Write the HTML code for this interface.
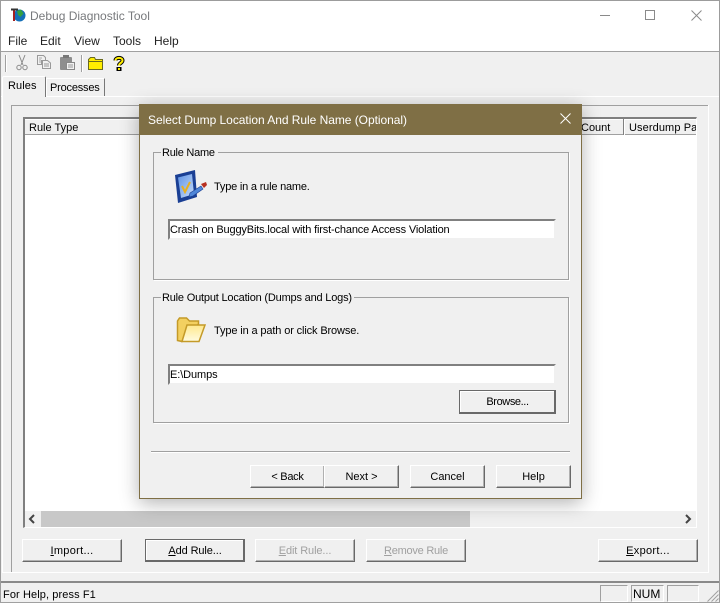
<!DOCTYPE html>
<html><head><meta charset="utf-8"><title>Debug Diagnostic Tool</title>
<style>
html,body{margin:0;padding:0;width:720px;height:603px;overflow:hidden;background:#f0f0f0}
body{position:relative;font-family:"Liberation Sans",sans-serif;font-size:11px;color:#000}
.a{position:absolute;box-sizing:border-box}
.t{position:absolute;white-space:nowrap;line-height:14px}
.b{position:absolute;box-sizing:border-box;background:#f0f0f0;border:1px solid;border-color:#fff #696969 #696969 #fff;box-shadow:inset -1px -1px 0 #b0b0b0;text-align:center;line-height:22px;white-space:nowrap}
.d{color:#a0a0a0}
.i{position:absolute;box-sizing:border-box;background:#fff;border:2px solid;border-color:#808080 #f0f0f0 #f0f0f0 #808080;white-space:nowrap;line-height:15px}
.g{position:absolute;box-sizing:border-box;border:1px solid #a0a0a0;box-shadow:1px 1px 0 #fff}
.l{position:absolute;background:#f0f0f0;padding:0 1px;line-height:13px;white-space:nowrap}
u{text-decoration:underline}
svg{position:absolute;overflow:visible}
</style></head><body>
<div class="a" style="left:0;top:0;width:720px;height:603px;border:1px solid #9c9c9c;border-bottom:0"></div>
<div class="a" style="left:1px;top:1px;width:718px;height:50px;background:#fff"></div>
<svg style="left:10px;top:7px" width="16" height="16" viewBox="0 0 16 16"><circle cx="9.500" cy="8.500" r="6" fill="#1570b8"/><path d="M7 4l4-1.500 2.500 4-3 3.500-2.500-2z" fill="#35a040"/><path d="M3 3h2v11H3z" fill="#a52020"/><path d="M1 1.500h7v2H1z" fill="#333"/></svg>
<div class="t" style="left:30px;top:9px;font-size:12px;color:#77797c">Debug Diagnostic Tool</div>
<div class="a" style="left:600px;top:15px;width:10px;height:1px;background:#8a8a8a"></div>
<div class="a" style="left:645px;top:10px;width:10px;height:10px;border:1px solid #8a8a8a"></div>
<svg style="left:691px;top:10px" width="11" height="11"><path d="M.5.5l10 10M10.500.5l-10 10" stroke="#8a8a8a" fill="none"/></svg>
<div class="t" style="left:8px;top:34px;font-size:12px;color:#222">File</div>
<div class="t" style="left:40px;top:34px;font-size:12px;color:#222">Edit</div>
<div class="t" style="left:74px;top:34px;font-size:12px;color:#222">View</div>
<div class="t" style="left:113px;top:34px;font-size:12px;color:#222">Tools</div>
<div class="t" style="left:154px;top:34px;font-size:12px;color:#222">Help</div>
<div class="a" style="left:1px;top:51px;width:718px;height:1px;background:#a0a0a0"></div>
<div class="a" style="left:5px;top:55px;width:1px;height:17px;background:#a0a0a0;box-shadow:1px 0 0 #fff"></div>
<div class="a" style="left:81px;top:55px;width:1px;height:17px;background:#a0a0a0;box-shadow:1px 0 0 #fff"></div>
<svg style="left:16px;top:55px" width="12" height="16"><path d="M3 0l4 10M9 0L5 10" stroke="#8a8a8a" fill="none"/><circle cx="3" cy="12.500" r="2.200" fill="none" stroke="#8a8a8a"/><circle cx="9" cy="12.500" r="2.200" fill="none" stroke="#8a8a8a"/></svg>
<svg style="left:37px;top:55px" width="15" height="15"><path d="M.5.500h6l2 2v3h-4v4h-4z" fill="#f0f0f0" stroke="#999"/><path d="M2 3h3M2 5h2M2 7h2" stroke="#aaa"/><path d="M5.500 5.500h5l3 2.500v5.500h-8z" fill="#f0f0f0" stroke="#999"/><path d="M7 9h5M7 11h5" stroke="#999"/></svg>
<svg style="left:60px;top:55px" width="16" height="15"><rect x="0" y="2" width="12" height="13" rx="1" fill="#8e8e8e"/><rect x="3" y="0" width="6" height="3" fill="#777"/><path d="M6.500 7.500h8v7h-8z" fill="#f0f0f0" stroke="#888"/><path d="M8 10h5M8 12h5" stroke="#999"/></svg>
<svg style="left:88px;top:57px" width="16" height="13"><path d="M.5 12.500v-10l2-2h4l1 2h7v10z" fill="#ffee00" stroke="#6a6a20"/><path d="M1 4.500h13" stroke="#6a6a20"/></svg>
<svg style="left:113px;top:56px" width="12" height="15"><path d="M2.500 4.500C2.500 1 9.500 1 9.500 4.500 9.500 7 6 7 6 9.500" fill="none" stroke="#000" stroke-width="4"/><rect x="3.500" y="11" width="5" height="4" fill="#000"/><path d="M2.500 4.500C2.500 1 9.500 1 9.500 4.500 9.500 7 6 7 6 9.500" fill="none" stroke="#ffee00" stroke-width="2"/><rect x="5" y="12" width="2" height="2" fill="#ffee00"/></svg>
<!-- tab pane -->
<div class="a" style="left:1px;top:96px;width:718px;height:1px;background:#fff"></div>
<div class="a" style="left:2px;top:96px;width:1px;height:477px;background:#fff"></div>
<div class="a" style="left:2px;top:572px;width:707px;height:1px;background:#fff"></div>
<div class="a" style="left:11px;top:105px;width:698px;height:1px;background:#a0a0a0"></div>
<div class="a" style="left:11px;top:105px;width:1px;height:467px;background:#a0a0a0"></div>
<div class="a" style="left:708px;top:105px;width:1px;height:467px;background:#fff"></div>
<div class="a" style="left:2px;top:76px;width:44px;height:21px;background:#f0f0f0;border:1px solid #fff;border-bottom:0;border-right:1px solid #777;border-radius:2px 2px 0 0"></div>
<div class="t" style="left:8px;top:79px;letter-spacing:.1px">Rules</div>
<div class="a" style="left:46px;top:78px;width:59px;height:18px;background:#f0f0f0;border-top:1px solid #fff;border-left:1px solid #fff;border-right:1px solid #777"></div>
<div class="t" style="left:50px;top:81px;letter-spacing:-.2px">Processes</div>
<!-- list -->
<div class="a" style="left:23px;top:117px;width:674px;height:411px;background:#fff;border:1px solid;border-color:#808080 #fff #fff #808080;border-top-width:2px;border-left-width:2px"></div>
<div class="a" style="left:25px;top:119px;width:671px;height:16px;background:#f0f0f0;border-top:1px solid #fff;border-bottom:1px solid #a0a0a0"></div>
<div class="t" style="left:29px;top:121px">Rule Type</div>
<div class="t" style="left:581px;top:121px">Count</div>
<div class="a" style="left:623px;top:119px;width:2px;height:16px;background:#808080;border-right:1px solid #fff"></div>
<div class="t" style="left:629px;top:121px;width:67px;overflow:hidden;letter-spacing:.1px">Userdump Path</div>
<div class="a" style="left:25px;top:511px;width:671px;height:16px;background:#f0f0f0"></div>
<div class="a" style="left:41px;top:511px;width:429px;height:16px;background:#c8c8c8"></div>
<svg style="left:28px;top:514px" width="8" height="10"><path d="M6 1L2 5l4 4" stroke="#444" stroke-width="2" fill="none"/></svg>
<svg style="left:684px;top:514px" width="8" height="10"><path d="M2 1l4 4-4 4" stroke="#444" stroke-width="2" fill="none"/></svg>
<!-- bottom buttons -->
<div class="b" style="left:22px;top:539px;width:100px;height:23px;letter-spacing:.3px"><u>I</u>mport...</div>
<div class="b" style="left:145px;top:539px;width:100px;height:23px;border-color:#696969;box-shadow:inset -1px -1px 0 #696969,inset 1px 1px 0 #fff;letter-spacing:-.1px"><u>A</u>dd Rule...</div>
<div class="b d" style="left:255px;top:539px;width:100px;height:23px;letter-spacing:-.1px"><u>E</u>dit Rule...</div>
<div class="b d" style="left:366px;top:539px;width:100px;height:23px;letter-spacing:-.25px"><u>R</u>emove Rule</div>
<div class="b" style="left:598px;top:539px;width:100px;height:23px;letter-spacing:.3px"><u>E</u>xport...</div>
<!-- status -->
<div class="a" style="left:1px;top:581px;width:718px;height:2px;background:#8a8a8a"></div>
<div class="a" style="left:0;top:602px;width:720px;height:1px;background:#a0a0a0"></div>
<div class="t" style="left:3px;top:588px;letter-spacing:.1px">For Help, press F1</div>
<div class="a" style="left:600px;top:585px;width:28px;height:17px;border:1px solid;border-color:#a0a0a0 #fff #fff #a0a0a0"></div>
<div class="a" style="left:631px;top:585px;width:33px;height:17px;border:1px solid;border-color:#a0a0a0 #fff #fff #a0a0a0"></div>
<div class="t" style="left:633px;top:587px;font-size:12px">NUM</div>
<div class="a" style="left:667px;top:585px;width:32px;height:17px;border:1px solid;border-color:#a0a0a0 #fff #fff #a0a0a0"></div>
<svg style="left:707px;top:590px" width="12" height="12"><path d="M11.500.5l-11 11M11.500 4.500l-7 7M11.500 8.500l-3 3" stroke="#a0a0a0" fill="none"/></svg>
<!-- dialog -->
<div class="a" style="left:139px;top:104px;width:443px;height:395px;background:#f0f0f0;border:1px solid #7f6f45;box-shadow:0 4px 18px rgba(0,0,0,.3)"></div>
<div class="a" style="left:139px;top:104px;width:443px;height:31px;background:#7f6f45"></div>
<div class="t" style="left:148px;top:113px;font-size:12px;color:#fff;letter-spacing:-.04px">Select Dump Location And Rule Name (Optional)</div>
<svg style="left:560px;top:113px" width="11" height="11"><path d="M.5.5l10 10M10.500.5l-10 10" stroke="#fff" fill="none"/></svg>
<div class="g" style="left:153px;top:152px;width:416px;height:128px"></div>
<div class="l" style="left:161px;top:147px;letter-spacing:-.25px;padding-right:3px">Rule Name</div>
<svg style="left:174px;top:169px" width="34" height="34" viewBox="0 0 34 34"><defs><linearGradient id="p" x1="0" y1="0" x2="1" y2="1"><stop offset="0" stop-color="#5f94e6"/><stop offset="1" stop-color="#c8dcf8"/></linearGradient></defs><path d="M1 6L21 1l2 27-19 6z" fill="#1a3f94"/><path d="M4 8.500L18 5l2 20-13 4z" fill="url(#p)"/><path d="M8 17l3 6 5-10" fill="none" stroke="#e8b020" stroke-width="2"/><path d="M16 24l11-7 2 3-10 7-4 1z" fill="#4f86d8" stroke="#1a3f94" stroke-width=".6"/><path d="M27 15l5-2 1 3-3 3z" fill="#b83020"/></svg>
<div class="t" style="left:214px;top:180px;letter-spacing:-.2px">Type in a rule name.</div>
<div class="i" style="left:168px;top:219px;width:388px;height:21px;padding-top:2px;letter-spacing:-.15px">Crash on BuggyBits.local with first-chance Access Violation</div>
<div class="g" style="left:153px;top:297px;width:416px;height:126px"></div>
<div class="l" style="left:161px;top:292px;letter-spacing:-.19px;padding-right:2px">Rule Output Location (Dumps and Logs)</div>
<svg style="left:176px;top:316px" width="30" height="27" viewBox="0 0 30 27"><defs><linearGradient id="f" x1="0" y1="0" x2="0" y2="1"><stop offset="0" stop-color="#ffe88c"/><stop offset="1" stop-color="#fffbe0"/></linearGradient></defs><path d="M1.500 24.500V5l2-3h7l3 3h9v3L6 25.500z" fill="#f3d060" stroke="#c49a28" stroke-width="1.500"/><path d="M6 25.500L11 9h18l-6 16.500z" fill="url(#f)" stroke="#c49a28" stroke-width="1.500"/></svg>
<div class="t" style="left:214px;top:324px;letter-spacing:-.13px">Type in a path or click Browse.</div>
<div class="i" style="left:168px;top:364px;width:388px;height:21px;padding-top:2px;letter-spacing:-.1px">E:\Dumps</div>
<div class="b" style="left:459px;top:390px;width:97px;height:24px;border-color:#696969;box-shadow:inset -1px -1px 0 #696969,inset 1px 1px 0 #fff;line-height:23px;letter-spacing:-.4px">Browse...</div>
<div class="a" style="left:151px;top:451px;width:419px;height:1px;background:#a0a0a0;box-shadow:0 1px 0 #fff"></div>
<div class="b" style="left:250px;top:465px;width:75px;height:23px;letter-spacing:-.3px">&lt; Back</div>
<div class="b" style="left:324px;top:465px;width:75px;height:23px">Next &gt;</div>
<div class="b" style="left:410px;top:465px;width:75px;height:23px">Cancel</div>
<div class="b" style="left:496px;top:465px;width:75px;height:23px">Help</div>
</body></html>
